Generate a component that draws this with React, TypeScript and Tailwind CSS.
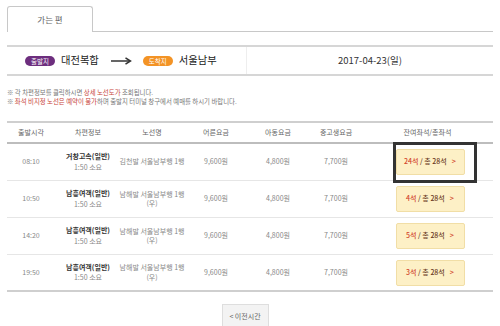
import React from "react";

const rows = [
  { time: "08:10", bus: "거창고속(일반)", route: ["김천발 서울남부행 1행"], seats: "24석", hl: true },
  { time: "10:50", bus: "남흥여객(일반)", route: ["남해발 서울남부행 1행", "(우)"], seats: "4석", hl: false },
  { time: "14:20", bus: "남흥여객(일반)", route: ["남해발 서울남부행 1행", "(우)"], seats: "5석", hl: false },
  { time: "19:50", bus: "남흥여객(일반)", route: ["남해발 서울남부행 1행", "(우)"], seats: "3석", hl: false },
];

const cols = "grid grid-cols-[48px_66px_62px_66px_58px_58px_125px]";

function Cell({ children, className = "" }: { children: React.ReactNode; className?: string }) {
  return (
    <div className={`flex flex-col items-center justify-center whitespace-nowrap ${className}`}>{children}</div>
  );
}

export default function App() {
  return (
    <div
      className="w-[500px] h-[326px] overflow-hidden bg-white text-[#888]"
      style={{ fontFamily: '"Noto Sans CJK KR", "Noto Sans", sans-serif' }}
    >
      {/* Tabs */}
      <div className="flex px-[7px] pt-[6px]">
        <div className="w-[86px] h-[26px] border border-b-0 border-[#c8c8c8] rounded-t-[3px] flex items-center justify-center text-[8.5px] text-[#666]">
          가는 편
        </div>
        <div className="flex-1 border-b border-[#c8c8c8]" />
      </div>

      {/* Route bar */}
      <div className="mx-[7px] mt-[13px] h-[31px] border-y-2 border-[#d6d6d6] flex">
        <div className="w-[239px] flex items-center pl-[18px]">
          <span className="h-[10px] px-[6px] rounded-full bg-[#6d2e7e] text-white text-[6.5px] leading-[10px]">출발지</span>
          <span className="ml-[6px] text-[10.3px] text-[#222] leading-none">대전복합</span>
          <svg className="ml-[12px]" width="21" height="8" viewBox="0 0 21 8">
            <path d="M0 4 H18" stroke="#333" strokeWidth="1.5" />
            <path d="M14.5 0.8 L19.5 4 L14.5 7.2" fill="none" stroke="#333" strokeWidth="1.5" />
          </svg>
          <span className="ml-[11px] h-[10px] px-[6px] rounded-full bg-[#f39325] text-white text-[6.5px] leading-[10px]">도착지</span>
          <span className="ml-[6px] text-[10.3px] text-[#222] leading-none">서울남부</span>
        </div>
        <div className="flex-1 border-l border-[#eeeeee] flex items-center justify-center text-[9.5px] text-[#333]">
          2017-04-23(일)
        </div>
      </div>

      {/* Notes */}
      <div className="mx-[7px] mt-[12px] text-[6.4px] leading-[9px] text-[#777]">
        <div>
          ※ 각 차편정보를 클릭하시면 <span className="text-[#c8453a]">상세 노선도가</span> 조회됩니다.
        </div>
        <div>
          ※ <span className="text-[#c8453a]">좌석 비지정 노선은 예약이 불가</span>하며 출발지 터미널 창구에서 예매를 하시기 바랍니다.
        </div>
      </div>

      {/* Table */}
      <div className="mx-[7px] mt-[15px] relative">
        <div className={`${cols} h-[23px] border-t-2 border-b-2 border-t-[#cfcfcf] border-b-[#bdbdbd] text-[7px] text-[#666]`}>
          <Cell>출발시각</Cell>
          <Cell>차편정보</Cell>
          <Cell>노선명</Cell>
          <Cell>어른요금</Cell>
          <Cell>아동요금</Cell>
          <Cell>중고생요금</Cell>
          <Cell>잔여좌석/총좌석</Cell>
        </div>
        {rows.map((r, i) => (
          <div
            key={i}
            className={`${cols} h-[37px] text-[7px] leading-[9.5px] ${
              i === rows.length - 1 ? "border-b-2 border-[#cfcfcf]" : "border-b border-[#e6e6e6]"
            }`}
          >
            <Cell>{r.time}</Cell>
            <Cell>
              <span className="font-bold text-[#333]">{r.bus}</span>
              <span className="mt-[1px]">1:50 소요</span>
            </Cell>
            <Cell>
              {r.route.map((t, j) => (
                <span key={j}>{t}</span>
              ))}
            </Cell>
            <Cell>9,600원</Cell>
            <Cell>4,800원</Cell>
            <Cell>7,700원</Cell>
            <Cell className="relative">
              <div className="w-[69px] h-[26px] ml-[5px] rounded-[2px] bg-[#fdf0c6] border border-[#f1dea6] flex items-center justify-center font-medium text-[7px] text-[#6b3a1e]">
                <span className="text-[#d2452c]">{r.seats}</span>
                <span>&nbsp;/ 총 28석</span>
                <span className="ml-[5px] text-[#d2452c] font-bold">&gt;</span>
              </div>
              {r.hl && (
                <div className="absolute left-[28px] top-[-2px] w-[84px] h-[41px] border-[3px] border-[#333]" />
              )}
            </Cell>
          </div>
        ))}
      </div>

      {/* Prev button */}
      <div className="flex justify-center mt-[12px] pr-[10px]">
        <div className="w-[47px] h-[24px] bg-[#f3f3f3] border border-[#dedede] flex items-center justify-center text-[7px] text-[#666]">
          &lt; 이전시간
        </div>
      </div>
    </div>
  );
}
